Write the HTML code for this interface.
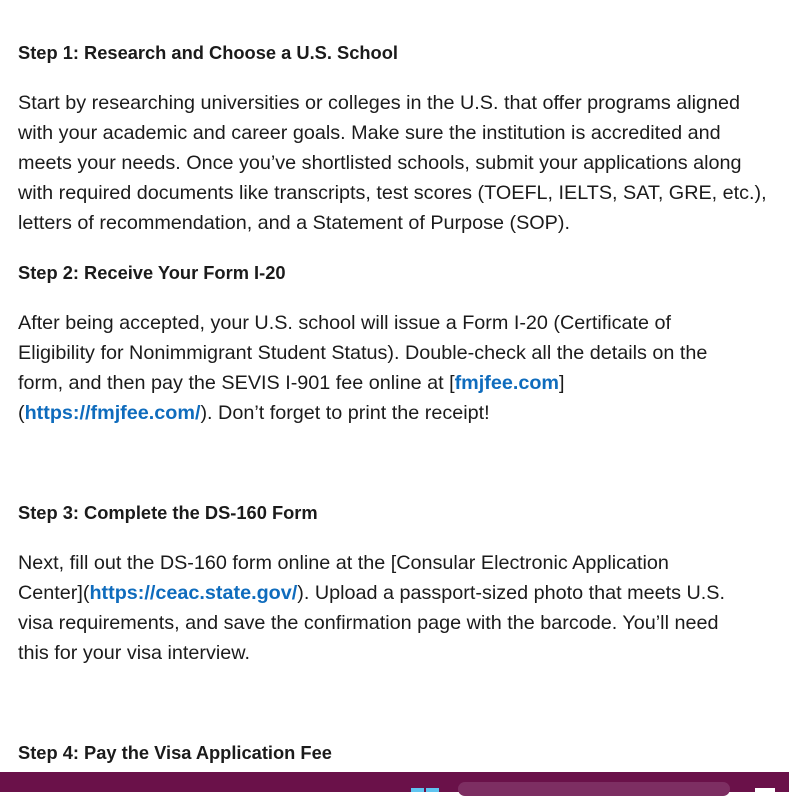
<!DOCTYPE html>
<html><head><meta charset="utf-8"><style>
body{margin:0;width:789px;height:792px;overflow:hidden;background:#fff;position:relative;font-family:"Liberation Sans",sans-serif;color:#1b1b1b}
.l{position:absolute;left:18px;white-space:nowrap;font-size:19.8px;line-height:30px}
.h{position:absolute;left:18px;white-space:nowrap;font-size:18.3px;font-weight:bold;line-height:30px}
a{color:#0f6cbd;font-weight:bold;text-decoration:none}
.bar{position:absolute;left:0;top:772px;width:789px;height:20px;background:#6a1149}
</style></head><body>
<div class="h" style="top:38px">Step 1: Research and Choose a U.S. School</div>
<div class="l" style="top:88px">Start by researching universities or colleges in the U.S. that offer programs aligned</div>
<div class="l" style="top:118px">with your academic and career goals. Make sure the institution is accredited and</div>
<div class="l" style="top:148px">meets your needs. Once you’ve shortlisted schools, submit your applications along</div>
<div class="l" style="top:178px">with required documents like transcripts, test scores (TOEFL, IELTS, SAT, GRE, etc.),</div>
<div class="l" style="top:208px">letters of recommendation, and a Statement of Purpose (SOP).</div>
<div class="h" style="top:258px">Step 2: Receive Your Form I-20</div>
<div class="l" style="top:308px">After being accepted, your U.S. school will issue a Form I-20 (Certificate of</div>
<div class="l" style="top:338px">Eligibility for Nonimmigrant Student Status). Double-check all the details on the</div>
<div class="l" style="top:368px">form, and then pay the SEVIS I-901 fee online at [<a>fmjfee.com</a>]</div>
<div class="l" style="top:398px">(<a>https://fmjfee.com/</a>). Don’t forget to print the receipt!</div>
<div class="h" style="top:498px">Step 3: Complete the DS-160 Form</div>
<div class="l" style="top:548px">Next, fill out the DS-160 form online at the [Consular Electronic Application</div>
<div class="l" style="top:578px">Center](<a>https://ceac.state.gov/</a>). Upload a passport-sized photo that meets U.S.</div>
<div class="l" style="top:608px">visa requirements, and save the confirmation page with the barcode. You’ll need</div>
<div class="l" style="top:638px">this for your visa interview.</div>
<div class="h" style="top:738px">Step 4: Pay the Visa Application Fee</div>
<div class="bar"></div>
<div style="position:absolute;left:411px;top:788px;width:13px;height:4px;background:#5fc4f0"></div>
<div style="position:absolute;left:426px;top:788px;width:13px;height:4px;background:#5fc4f0"></div>
<div style="position:absolute;left:458px;top:782px;width:272px;height:14px;border-radius:12px;background:#7d2e62"></div>
<div style="position:absolute;left:755px;top:788px;width:20px;height:4px;background:#fff"></div>
</body></html>
